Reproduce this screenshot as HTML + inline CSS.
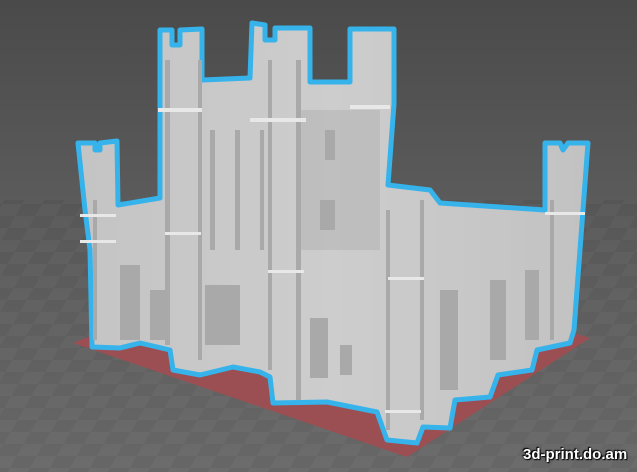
<!DOCTYPE html>
<html><head><style>
html,body{margin:0;padding:0;width:637px;height:472px;overflow:hidden;background:#5e5e5e}
svg{display:block}
.wm{position:absolute;left:523px;top:446px;font:bold 15px "Liberation Sans",sans-serif;color:#fff;text-shadow:0 0 2px #000,1px 1px 1px #000,-1px -1px 1px #000}
</style></head><body>
<svg width="637" height="472" viewBox="0 0 637 472">
<defs>
<linearGradient id="bg" x1="0" y1="0" x2="0" y2="1">
<stop offset="0" stop-color="#4a4a4a"/><stop offset="0.5" stop-color="#5e5e5e"/><stop offset="1" stop-color="#6c6c6c"/>
</linearGradient>
<pattern id="ck" width="40" height="40" patternUnits="userSpaceOnUse" patternTransform="skewX(-30) scale(1,0.6)">
<rect width="20" height="20" fill="#000" opacity="0.05"/><rect x="20" y="20" width="20" height="20" fill="#000" opacity="0.05"/>
</pattern>
<linearGradient id="cs" x1="0" y1="0" x2="1" y2="0">
<stop offset="0" stop-color="#c4c4c4"/><stop offset="0.5" stop-color="#cdcdcd"/><stop offset="1" stop-color="#c2c2c2"/>
</linearGradient>
</defs>
<rect width="637" height="472" fill="url(#bg)"/>
<rect y="200" width="637" height="272" fill="url(#ck)"/>
<polygon points="73,343 300,250 590,338 407,457" fill="#9c4f52"/>
<path d="M78,143 L95,143 L95,150 L100,150 L100,143 L117,141 L118,205 L160,198 L160,30 L172,30 L172,45 L180,45 L180,30 L202,29 L202,80 L250,78 L252,23 L265,25 L265,40 L275,40 L275,28 L310,28 L310,82 L350,82 L350,29 L394,29 L394,104 L388,185 L430,190 L440,203 L545,210 L545,143 L560,143 L563,150 L568,143 L588,143 L574,330 L570,343 L537,350 L532,370 L498,375 L490,397 L455,400 L450,428 L423,427 L417,443 L387,440 L377,412 L327,402 L273,403 L270,377 L260,372 L233,367 L200,375 L173,370 L170,350 L140,343 L120,348 L92,347 L90,250 L85,210 Z" fill="url(#cs)" stroke="#36b3ea" stroke-width="5" stroke-linejoin="round"/>
<g fill="#a9a9a9">
<rect x="165" y="60" width="5" height="285"/><rect x="198" y="60" width="4" height="300"/>
<rect x="268" y="60" width="4" height="310"/><rect x="296" y="60" width="5" height="340"/>
<rect x="386" y="210" width="4" height="220"/><rect x="420" y="200" width="4" height="220"/>
<rect x="93" y="200" width="4" height="140"/><rect x="550" y="200" width="4" height="140"/>
<rect x="300" y="110" width="80" height="140" opacity="0.4"/>
<rect x="210" y="130" width="5" height="120"/><rect x="235" y="130" width="5" height="120"/><rect x="260" y="130" width="4" height="120"/>
<rect x="120" y="265" width="20" height="75"/><rect x="150" y="290" width="20" height="50"/>
<rect x="205" y="285" width="35" height="60"/><rect x="310" y="318" width="18" height="60"/>
<rect x="340" y="345" width="12" height="30"/>
<rect x="440" y="290" width="18" height="100"/><rect x="490" y="280" width="16" height="80"/><rect x="525" y="270" width="14" height="70"/>
<rect x="325" y="130" width="10" height="30"/><rect x="320" y="200" width="15" height="30"/>
</g>
<g fill="#e8e8e8">
<rect x="158" y="108" width="44" height="4"/><rect x="250" y="118" width="56" height="4"/><rect x="350" y="105" width="40" height="4"/>
<rect x="80" y="214" width="36" height="3"/><rect x="80" y="240" width="36" height="3"/>
<rect x="165" y="232" width="36" height="3"/><rect x="268" y="270" width="36" height="3"/>
<rect x="388" y="277" width="36" height="3"/><rect x="545" y="212" width="40" height="3"/>
<rect x="385" y="410" width="36" height="3"/>
</g>
</svg>
<div class="wm">3d-print.do.am</div>
</body></html>
